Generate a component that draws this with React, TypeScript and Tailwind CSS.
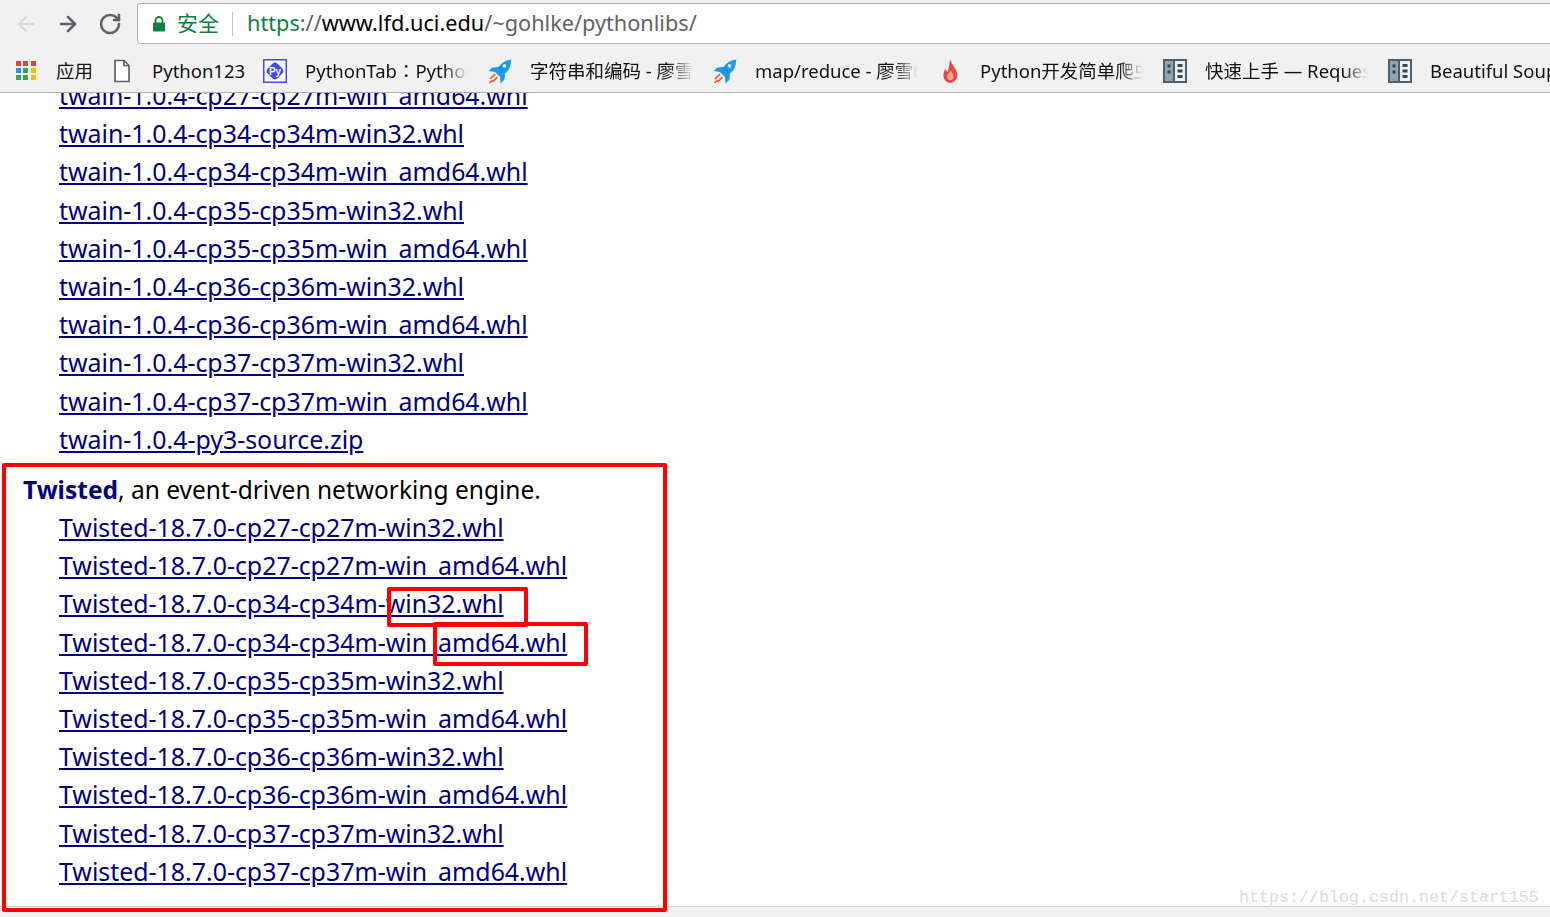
import { ArrowLeft, ArrowRight, RotateCw } from "lucide-react";

const uiFont = "font-['Noto_Sans','Noto_Sans_CJK_SC',sans-serif]";

const twainLinks = [
  "twain-1.0.4-cp27-cp27m-win_amd64.whl",
  "twain-1.0.4-cp34-cp34m-win32.whl",
  "twain-1.0.4-cp34-cp34m-win_amd64.whl",
  "twain-1.0.4-cp35-cp35m-win32.whl",
  "twain-1.0.4-cp35-cp35m-win_amd64.whl",
  "twain-1.0.4-cp36-cp36m-win32.whl",
  "twain-1.0.4-cp36-cp36m-win_amd64.whl",
  "twain-1.0.4-cp37-cp37m-win32.whl",
  "twain-1.0.4-cp37-cp37m-win_amd64.whl",
  "twain-1.0.4-py3-source.zip",
];

const twistedLinks = [
  "Twisted-18.7.0-cp27-cp27m-win32.whl",
  "Twisted-18.7.0-cp27-cp27m-win_amd64.whl",
  "Twisted-18.7.0-cp34-cp34m-win32.whl",
  "Twisted-18.7.0-cp34-cp34m-win_amd64.whl",
  "Twisted-18.7.0-cp35-cp35m-win32.whl",
  "Twisted-18.7.0-cp35-cp35m-win_amd64.whl",
  "Twisted-18.7.0-cp36-cp36m-win32.whl",
  "Twisted-18.7.0-cp36-cp36m-win_amd64.whl",
  "Twisted-18.7.0-cp37-cp37m-win32.whl",
  "Twisted-18.7.0-cp37-cp37m-win_amd64.whl",
];

const AppsIcon = () => {
  const colors = ["#ea4335", "#ea4335", "#ea4335", "#4285f4", "#34a853", "#fbbc05", "#34a853", "#34a853", "#fbbc05"];
  return (
    <div className="grid grid-cols-3 gap-[2px] w-[20px] h-[20px]">
      {colors.map((c, i) => (
        <span key={i} className="w-[5px] h-[5px]" style={{ backgroundColor: c }} />
      ))}
    </div>
  );
};

const FileIcon = () => (
  <svg width="24" height="24" viewBox="0 0 24 24" fill="none">
    <path d="M5 1.500h9l5 5v16H5z" fill="#fff" stroke="#5f6368" strokeWidth="1.700" />
    <path d="M14 1.500v5h5" stroke="#5f6368" strokeWidth="1.700" />
  </svg>
);

const PyIcon = () => (
  <svg width="24" height="24" viewBox="0 0 24 24">
    <rect x="0.750" y="0.750" width="22.500" height="22.500" fill="#fff" stroke="#3d4cf5" strokeWidth="1.500" />
    <rect x="5" y="5" width="14" height="14" rx="4" fill="#3d4cf5" transform="rotate(45 12 12)" />
    <text x="12" y="15.500" textAnchor="middle" fontSize="10" fontWeight="700" fill="#fff" fontFamily="Liberation Sans">Py</text>
  </svg>
);

const RocketIcon = () => (
  <svg width="24" height="26" viewBox="0 0 24 26">
    <path d="M23.500 1.500C18 2 13.500 4.500 10.500 9L4.500 9.500 0.500 13l6.500 1 5 5 .5 6.500 4-4 .5-6c4-3 6.500-8 6-15z" fill="#1e9be8" />
    <circle cx="16.500" cy="8" r="1.800" fill="#fff" />
    <path d="M10.500 9l5 5" stroke="#1478c4" strokeWidth="0.800" />
    <path d="M2 21l5-5M4.500 24l5-5M1.500 25l3-3" stroke="#ee5a3a" strokeWidth="1.700" />
  </svg>
);

const FlameIcon = () => (
  <svg width="24" height="24" viewBox="0 0 24 24">
    <path d="M12.500 0c.5 4 2 5.500 4 8.500 2 3 3.500 5.500 2.500 9.500-.9 3.500-3.500 5.500-6.500 6-3.500-.3-6.500-2.800-7-6.500-.4-3.500 1-6 2.500-8 0 1.500.5 3 1.500 3.500 1.500-3.500 1.500-8 3-13z" fill="#e8483f" />
    <path d="M12.500 11c.5 2 3.200 4 3 6.800-.2 2-1.500 3.500-3.200 3.700-1.800-.2-3.200-1.700-3.300-3.700-.1-2.800 3-4 3.500-6.800z" fill="#f7a59b" />
  </svg>
);

const BookIcon = () => (
  <svg width="24" height="24" viewBox="0 0 24 24">
    <rect width="24" height="24" fill="#4d5f69" />
    <rect x="2" y="2" width="8" height="20" fill="#8fa4b0" />
    <rect x="12" y="2" width="10" height="20" fill="#eef1f3" />
    <path d="M4.500 5.500h3v3h-3zM4.500 11.500h3v3h-3z" fill="#37474f" />
    <path d="M14.500 5h5v3h-5zM14.500 10.500h5v3h-5zM14.500 16h5v3h-5z" fill="#37474f" />
  </svg>
);

const bookmarks = [
  { icon: <PyIcon />, label: "PythonTab：Python中文开发者社区", cjk: "font-['Noto_Sans','Noto_Sans_CJK_TC',sans-serif]" },
  { icon: <RocketIcon />, label: "字符串和编码 - 廖雪峰的官方网站", cjk: "" },
  { icon: <RocketIcon />, label: "map/reduce - 廖雪峰的官方网站", cjk: "" },
  { icon: <FlameIcon />, label: "Python开发简单爬虫教程", cjk: "" },
  { icon: <BookIcon />, label: "快速上手 — Requests 文档", cjk: "" },
  { icon: <BookIcon />, label: "Beautiful Soup 4.2.0 文档", cjk: "" },
];

const FileLink = ({ name }: { name: string }) => (
  <div className="pl-[59px] h-[38.2px] leading-[38.2px] whitespace-nowrap">
    <a href="#" className="text-[#000080] underline">
      {name}
    </a>
  </div>
);

export default function App() {
  return (
    <div className={`relative h-[917px] w-[1550px] overflow-hidden flex flex-col bg-white ${uiFont}`}>
      {/* toolbar */}
      <div className="h-[44px] bg-[#f1f1f1] flex items-center shrink-0">
        <div className="w-[137px] flex items-center pl-[14px] pt-[3px] gap-[18px] shrink-0">
          <ArrowLeft size={24} strokeWidth={2.200} className="text-[#d8d8d8]" />
          <ArrowRight size={24} strokeWidth={2.500} className="text-[#5f6368]" />
          <RotateCw size={24} strokeWidth={2.600} className="text-[#5f6368]" />
        </div>
        <div className="flex-1 h-[41px] mt-[3px] -mr-[8px] bg-white border border-[#b4b4b4] rounded-[3px] flex items-center">
          <svg width="14" height="16" viewBox="0 0 14 16" className="ml-[14px] shrink-0">
            <path d="M3.500 7V4.500a3.500 3.500 0 0 1 7 0V7" fill="none" stroke="#0b8043" strokeWidth="1.800" />
            <rect x="1" y="6.500" width="12" height="9" rx="1" fill="#0b8043" />
          </svg>
          <span className="ml-[11px] text-[#0b8043] text-[21px]">安全</span>
          <span className="ml-[13px] w-px h-[24px] bg-[#c4c4c4]" />
          <span className="ml-[14px] text-[21.700px]">
            <span className="text-[#0b8043]">https</span>
            <span className="text-[#5f6368]">://</span>
            <span className="text-black">www.lfd.uci.edu</span>
            <span className="text-[#5f6368]">/~gohlke/pythonlibs/</span>
          </span>
        </div>
      </div>

      {/* bookmarks */}
      <div className="h-[49px] pt-[5px] bg-[#f1f1f1] border-b border-[#b4b4b4] flex items-center pl-[16px] text-[18.500px] text-[#111] whitespace-nowrap shrink-0">
        <div className="flex items-center gap-[20px] mr-[18px]">
          <AppsIcon />
          <span className="w-[36px]">应用</span>
        </div>
        <div className="flex items-center gap-[18px] mr-[19px]">
          <FileIcon />
          <span className="w-[92px]">Python123</span>
        </div>
        <div className="flex items-center gap-[20px]">
          {bookmarks.map((b) => (
            <div key={b.label} className="flex items-center gap-[18px] shrink-0">
              <span className="flex justify-center w-[24px]">{b.icon}</span>
              <span
                className={`block w-[163px] overflow-hidden [mask-image:linear-gradient(to_right,black_85%,transparent)] ${b.cjk}`}
              >
                {b.label}
              </span>
            </div>
          ))}
        </div>
      </div>

      {/* page */}
      <div className="flex-1 overflow-hidden text-[24.900px]">
        <div className="-mt-[17px]">
          {twainLinks.map((n) => (
            <FileLink key={n} name={n} />
          ))}
          <div className="h-[12px]" />
          <div className="pl-[23px] h-[38.2px] leading-[40px] text-[24.500px] text-black">
            <strong className="text-[#000080] font-bold">Twisted</strong>, an event-driven networking engine.
          </div>
          {twistedLinks.map((n) => (
            <FileLink key={n} name={n} />
          ))}
        </div>
      </div>

      {/* status strip */}
      <div className="h-[11px] bg-[#f1f1f1] border-t border-[#d4d4d4] shrink-0" />

      {/* watermark and annotations, drawn on top of the screenshot */}
      <div className="absolute left-[1239px] top-[887px] font-['Liberation_Mono',monospace] text-[16.670px] leading-[22px] text-[#dcdcd4]">
        https://blog.csdn.net/start155
      </div>
      <div className="absolute left-[2px] top-[463px] w-[665px] h-[449px] border-4 border-[#fe0000] rounded-[2px]" />
      <div className="absolute left-[387px] top-[587px] w-[141px] h-[40px] border-4 border-[#fe0000] rounded-[2px]" />
      <div className="absolute left-[433px] top-[622px] w-[155px] h-[44px] border-4 border-[#fe0000] rounded-[2px]" />
    </div>
  );
}
